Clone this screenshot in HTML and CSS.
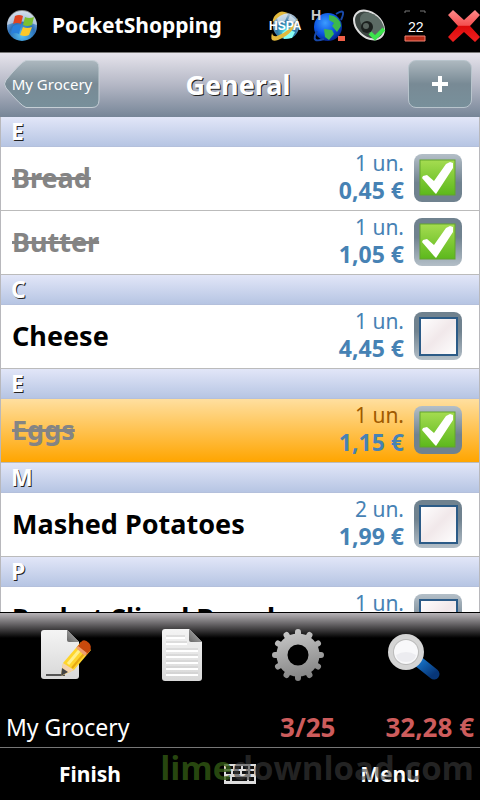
FILE: index.html
```html
<!DOCTYPE html>
<html lang="en">

<head>
    <meta charset="UTF-8">
    <meta name="viewport" content="width=device-width, initial-scale=1.0">
    <title>PocketShopping</title>
    <link rel="stylesheet" href="styles.css">
</head>

<body>
    <!-- shared shapes -->
    <svg class="defs" width="0" height="0" aria-hidden="true">
        <defs>
            <linearGradient id="green" x1="0" y1="0" x2="0" y2="1">
                <stop offset="0" stop-color="#a5dc50" />
                <stop offset="1" stop-color="#5cb81c" />
            </linearGradient>
            <linearGradient id="pane" x1="0" y1="0" x2="1" y2="1">
                <stop offset="0" stop-color="#fff" />
                <stop offset=".5" stop-color="#f1e8ea" />
                <stop offset="1" stop-color="#fff" />
            </linearGradient>
            <linearGradient id="paper" x1="0" y1="0" x2="0" y2="1">
                <stop offset="0" stop-color="#f4f4f4" />
                <stop offset="1" stop-color="#d8d8d8" />
            </linearGradient>
            <linearGradient id="steel" gradientUnits="userSpaceOnUse" x1="20" y1="0" x2="32" y2="52">
                <stop offset="0" stop-color="#c8c8c8" />
                <stop offset="1" stop-color="#808080" />
            </linearGradient>
            <linearGradient id="fold" x1="0" y1="1" x2="1" y2="0">
                <stop offset="0" stop-color="#666" />
                <stop offset="1" stop-color="#bbb" />
            </linearGradient>
            <linearGradient id="handle" x1="0" y1="0" x2="1" y2="1">
                <stop offset="0" stop-color="#1670c4" />
                <stop offset="1" stop-color="#073678" />
            </linearGradient>
            <linearGradient id="red" x1="0" y1="0" x2="0" y2="1">
                <stop offset="0" stop-color="#ff8a8a" />
                <stop offset=".48" stop-color="#f45050" />
                <stop offset=".5" stop-color="#dd0a0a" />
                <stop offset="1" stop-color="#ee2020" />
            </linearGradient>
            <radialGradient id="orb" cx=".5" cy=".8" r=".85">
                <stop offset="0" stop-color="#58c4f4" />
                <stop offset=".5" stop-color="#2c70b8" />
                <stop offset="1" stop-color="#d8e2ee" />
            </radialGradient>
            <radialGradient id="earth" cx=".4" cy=".35" r=".7">
                <stop offset="0" stop-color="#3c9cff" />
                <stop offset=".6" stop-color="#0a50e0" />
                <stop offset="1" stop-color="#042080" />
            </radialGradient>
            <radialGradient id="globe" cx=".5" cy=".7" r=".7">
                <stop offset="0" stop-color="#50e8f4" />
                <stop offset=".5" stop-color="#3078a8" />
                <stop offset="1" stop-color="#b8c8d8" />
            </radialGradient>
            <symbol id="tick" viewBox="0 0 48 48">
                <rect x="6" y="6" width="35" height="35" fill="url(#green)" stroke="#62a52c" />
                <path d="M8 24 9 22 13 21 20 27 32 10 36 8 39 9 39 14 24 37 22 40 20 38Z" fill="#fff" />
            </symbol>
            <symbol id="empty" viewBox="0 0 48 48">
                <rect x="6" y="6" width="37" height="37" fill="url(#pane)" stroke="#2c5b87" stroke-width="2" />
            </symbol>
        </defs>
    </svg>

    <header class="system">
        <svg class="start" viewBox="0 0 32 32" aria-hidden="true">
            <circle cx="16" cy="16" r="15" fill="url(#orb)" />
            <path d="M1 15A15 15 0 0 1 31 15Q16 8 1 15Z" fill="#e2e8ee" opacity=".6" />
            <path d="M9 6Q13 4 17 6L15 14Q11 12 7 14Z" fill="#e04420" />
            <path d="M19 7Q23 9 28 7L26 15Q21 17 17 15Z" fill="#7cc030" />
            <path d="M7 16Q11 14 15 16L13 24Q9 22 5 24Z" fill="#2880dc" />
            <path d="M17 17Q21 19 26 17L23 25Q19 27 14 25Z" fill="#fcc828" />
        </svg>
        <h1 class="app-name">PocketShopping</h1>
        <div class="tray">
            <svg viewBox="0 0 34 34" aria-hidden="true">
                <circle cx="18" cy="17" r="13" fill="url(#globe)" />
                <path d="M9 8Q14 3 20 5L17 12 10 14ZM22 6l6 5-3 3-5-3z" fill="#e4edf5" opacity=".7" />
                <path d="M14 24l5-4 8 3-3 6-8 1z" fill="#88fff4" />
                <path d="M10 4Q4 8 5 13Q12 5 20 4Q13 1 10 4ZM4 24Q1 34 10 31Q26 25 30 9Q23 22 9 27Q5 28 4 24Z" fill="#e2b93c" />
                <text class="hspa" x="1" y="21">HSPA</text>
            </svg>
            <svg viewBox="0 0 34 34" aria-hidden="true">
                <circle cx="16" cy="18" r="14" fill="url(#earth)" />
                <path d="M17 6Q28 7 29 17L25 23 20 17 22 14 17 11ZM12 20l8 1 2 4-5 6-4-3Z" fill="#3cb84c" />
                <path d="M24 5Q35-2 29 11M5 22Q-2 35 12 30" fill="none" stroke="#1848a8" stroke-width="2" />
                <text class="net" x="-1" y="11">H</text>
                <path d="M26 27h7v5h-7z" fill="#f06048" />
            </svg>
            <svg viewBox="0 0 34 34" aria-hidden="true">
                <ellipse cx="13" cy="16" rx="12" ry="17" fill="#3c4642" stroke="#ddd" stroke-width="2" transform="rotate(-48 13 16)" />
                <ellipse cx="16" cy="15" rx="9" ry="14" fill="#5c6b65" transform="rotate(-48 16 15)" />
                <circle cx="11" cy="18" r="6" fill="#1c211f" />
                <circle cx="10" cy="17" r="3" fill="#58635e" />
                <path d="M14 24 19 29 28 20" fill="none" stroke="#3ce44c" stroke-width="4" />
            </svg>
            <svg viewBox="0 0 34 34" aria-hidden="true">
                <path d="M5 4V2H10M20 2H25V4" fill="none" stroke="#777" />
                <path d="M5 27H25V32H5Z" fill="#b82c18" stroke="#ef8070" />
                <text class="level" x="8" y="23">22</text>
            </svg>
        </div>
        <button class="close" type="button" aria-label="Close">
            <svg viewBox="0 0 32 34" aria-hidden="true">
                <path d="M5 1 16 11 27 1 32 6 22 17 32 28 27 33 16 23 5 33 0 28 10 17 0 6Z" fill="url(#red)" />
            </svg>
        </button>
    </header>

    <nav class="title-bar">
        <button class="back" type="button">
            <svg viewBox="0 0 96 48" aria-hidden="true">
                <defs>
                    <linearGradient id="backfill" x1="0" y1="0" x2="0" y2="1">
                        <stop offset="0" stop-color="#adb8bf" />
                        <stop offset=".5" stop-color="#788a95" />
                        <stop offset="1" stop-color="#78909b" />
                    </linearGradient>
                </defs>
                <path d="M22 .5H88Q95 .5 95 8V40Q95 47.500 88 47.500H22Q17 46 2 28Q-1 24 2 20Q17 2 22 .5Z" fill="url(#backfill)" stroke="#c5ced5" />
            </svg>
            <span>My Grocery</span>
        </button>
        <h2 class="title">General</h2>
        <button class="add" type="button" aria-label="Add item">
            <svg viewBox="0 0 16 16" aria-hidden="true">
                <path d="M6 0h4v6h6v4h-6v6H6v-6H0V6h6z" fill="#fff" />
            </svg>
        </button>
    </nav>

    <main class="list">
        <h3 class="letter">E</h3>
        <div class="item done">
            <label class="name" for="bread">Bread</label>
            <p class="amount"><span>1 un.</span><b>0,45 €</b></p>
            <span class="check light"><input type="checkbox" id="bread" checked><svg aria-hidden="true"><use href="#tick" /></svg></span>
        </div>
        <div class="item done">
            <label class="name" for="butter">Butter</label>
            <p class="amount"><span>1 un.</span><b>1,05 €</b></p>
            <span class="check"><input type="checkbox" id="butter" checked><svg aria-hidden="true"><use href="#tick" /></svg></span>
        </div>
        <h3 class="letter">C</h3>
        <div class="item">
            <label class="name" for="cheese">Cheese</label>
            <p class="amount"><span>1 un.</span><b>4,45 €</b></p>
            <span class="check"><input type="checkbox" id="cheese"><svg aria-hidden="true"><use href="#empty" /></svg></span>
        </div>
        <h3 class="letter">E</h3>
        <div class="item done selected">
            <label class="name" for="eggs">Eggs</label>
            <p class="amount"><span>1 un.</span><b>1,15 €</b></p>
            <span class="check light"><input type="checkbox" id="eggs" checked><svg aria-hidden="true"><use href="#tick" /></svg></span>
        </div>
        <h3 class="letter">M</h3>
        <div class="item">
            <label class="name" for="potatoes">Mashed Potatoes</label>
            <p class="amount"><span>2 un.</span><b>1,99 €</b></p>
            <span class="check"><input type="checkbox" id="potatoes"><svg aria-hidden="true"><use href="#empty" /></svg></span>
        </div>
        <h3 class="letter">P</h3>
        <div class="item">
            <label class="name" for="pocket">Pocket Sliced Bread</label>
            <p class="amount"><span>1 un.</span><b>1,25 €</b></p>
            <span class="check light"><input type="checkbox" id="pocket"><svg aria-hidden="true"><use href="#empty" /></svg></span>
        </div>
    </main>

    <div class="tools">
        <button type="button" aria-label="Edit">
            <svg viewBox="0 0 52 52" aria-hidden="true">
                <path d="M4 1H27L39 13V47Q39 50 36 50H4Q1 50 1 47V4Q1 1 4 1Z" fill="url(#paper)" />
                <path d="M27 1 39 13H29Q27 13 27 11Z" fill="url(#fold)" />
                <path d="M6 46H25" stroke="#555" stroke-width="2" />
                <path d="M21 47 23 34 41 13 51 21 34 41Z" fill="#ffd52c" />
                <path d="M28 35 44 16" stroke="#fff08a" stroke-width="3" />
                <path d="M32 39 48 20" stroke="#e7a812" stroke-width="2" />
                <path d="M21 47 23 34 34 41Z" fill="#f4d3ac" />
                <path d="M21 47 22 39 28 43Z" fill="#444" />
                <path d="M37 18 42 12Q45 10 49 14Q52 17 50 22L46 26Z" fill="#c9490c" />
                <path d="M36 19 38 17 47 24 45 27Z" fill="#efa070" />
            </svg>
        </button>
        <button type="button" aria-label="List">
            <svg viewBox="0 0 52 52" aria-hidden="true">
                <path d="M9 0H33L46 13V49Q46 52 43 52H9Q6 52 6 49V3Q6 0 9 0Z" fill="url(#paper)" />
                <path d="M10 9H29M10 15H31M10 22H42M10 28H42M10 34H42M10 40H42M10 46H42" stroke="#fff" stroke-width="2" />
                <path d="M10 7H29M10 13H31M10 20H42M10 26H42M10 32H42M10 38H42M10 44H42" stroke="#ccc" />
                <path d="M33 0 46 13H35Q33 13 33 11Z" fill="url(#fold)" />
            </svg>
        </button>
        <button type="button" aria-label="Settings">
            <svg viewBox="0 0 52 52" aria-hidden="true">
                <circle cx="26" cy="26" r="16" fill="none" stroke="url(#steel)" stroke-width="11" />
                <path d="M26.010 7 26 3M26.010 45 26 49M7 26.010 3 26M45 26.010 49 26M35.500 9.500 37.500 6M16.500 9.500 14.500 6M42.500 16.500 46 14.500M9.500 16.500 6 14.500M42.500 35.500 46 37.500M9.500 35.500 6 37.500M35.500 42.500 37.500 46M16.500 42.500 14.500 46" fill="none" stroke="url(#steel)" stroke-width="6" stroke-linecap="round" />
            </svg>
        </button>
        <button type="button" aria-label="Search">
            <svg viewBox="0 0 52 52" aria-hidden="true">
                <path d="M31 33 46 45" stroke="url(#handle)" stroke-width="11" stroke-linecap="round" />
                <circle cx="18" cy="23" r="18" fill="#d5d5d5" />
                <circle cx="18" cy="23" r="13" fill="#bbb" />
                <circle cx="18" cy="23" r="12" fill="#f8f8fa" />
                <path d="M8 26Q18 20 28 26Q27 33 18 33Q9 33 8 26Z" fill="#ececf0" />
            </svg>
        </button>
    </div>

    <div class="totals">
        <span class="list-name">My Grocery</span>
        <b>3/25</b>
        <b>32,28 €</b>
    </div>

    <footer class="softkeys">
        <button type="button">Finish</button>
        <button type="button" aria-label="Keyboard">
            <svg viewBox="0 0 32 22" aria-hidden="true">
                <path d="M0 1H32V21H0Z" fill="#ddd" />
                <path d="M2 3h7v3H2zM11 3h6v3h-6zM19 3h5v3h-5zM26 3h4v3h-4zM2 8h5v3H2zM9 8h7v3H9zM18 8h6v3h-6zM26 8h4v3h-4zM2 14h4v4H2zM8 14h15v4H8zM25 14h5v4h-5z" fill="#111" />
            </svg>
        </button>
        <button type="button">Menu</button>
        <span class="watermark"><i>lime</i>download.com</span>
    </footer>
</body>

</html>
```
FILE: styles.css
```css
* {
    box-sizing: border-box;
}

body,
h1,
h2,
h3,
p {
    margin: 0;
    padding: 0;
}

body {
    display: flex;
    flex-direction: column;
    height: 100vh;
    background: #000;
    color: #fff;
    font: 21px/27px "Noto Sans", sans-serif;
}

button {
    border: 0;
    padding: 0;
    background: none;
    color: inherit;
    font: inherit;
    cursor: pointer;
}

svg {
    display: block;
}

.defs {
    position: absolute;
}

/* system bar */
.system {
    display: flex;
    align-items: center;
    height: 52px;
    padding-left: 6px;
    flex: none;
}

.start {
    width: 32px;
    height: 32px;
}

.app-name {
    flex: 1;
    padding: 0 0 2px 14px;
    font-size: 21px;
}

.tray {
    display: flex;
    gap: 10px;
    padding-right: 14px;
}

.tray svg {
    width: 34px;
    height: 34px;
    overflow: visible;
}

.tray text {
    fill: #fff;
    font-family: "Liberation Sans", sans-serif;
}

.tray .hspa {
    font-size: 12px;
    font-weight: bold;
}

.tray .net {
    fill: #ccc;
    font-size: 14px;
    font-weight: bold;
}

.tray .level {
    font-size: 14px;
}

.close svg {
    width: 32px;
    height: 34px;
}

/* title bar */
.title-bar {
    display: grid;
    grid-template-columns: 96px 1fr 96px;
    align-items: center;
    flex: none;
    height: 65px;
    padding: 0 8px 2px 4px;
    border-top: 1px solid #777;
    background: linear-gradient(#e6e4ec, #b4b7c5 50%, #768597);
}

.back {
    display: grid;
    align-items: center;
    font-size: 15px;
}

.back svg,
.back span {
    grid-area: 1 / 1;
}

.title {
    text-align: center;
    font-size: 27px;
    text-shadow: 1px 1px #222;
}

.add {
    display: grid;
    place-items: center;
    justify-self: end;
    width: 64px;
    height: 48px;
    border: 1px solid #b8c4cc;
    border-radius: 8px;
    background: linear-gradient(#adb8bf, #788a95 50%, #78909b);
}

.add svg {
    width: 16px;
    height: 16px;
}

/* shopping list */
.list {
    flex: 1;
    overflow: hidden;
    border: solid #b8b8bc;
    border-width: 0 1px;
    background: #fff;
}

.letter {
    height: 30px;
    padding-left: 10px;
    background: linear-gradient(#e2e6f8, #b6c5e3);
    border-bottom: 1px solid #b4c0dc;
    font-size: 23px;
    line-height: 28px;
    text-shadow: 1px 1px #222;
}

.item {
    display: flex;
    align-items: center;
    height: 64px;
    padding: 0 17px 2px 11px;
    border-bottom: 1px solid #bbb;
    color: #000;
}

.name {
    flex: 1;
    font-size: 27px;
    font-weight: bold;
    white-space: nowrap;
}

.done .name {
    color: #848484;
    text-decoration: line-through;
    text-decoration-thickness: 3px;
}

.amount {
    display: flex;
    flex-direction: column;
    padding: 0 10px 2px 0;
    color: #4682b4;
    text-align: right;
}

.amount b {
    font-size: 23px;
}

.selected {
    background: linear-gradient(#ffdf9f, #ffa500);
}

.selected .amount span {
    color: #a05a00;
}

.check {
    display: grid;
    width: 48px;
    height: 48px;
}

.check input,
.check svg {
    grid-area: 1 / 1;
    width: 48px;
    height: 48px;
    margin: 0;
}

.check input {
    appearance: none;
    border-radius: 8px;
    background: linear-gradient(#70828f 40%, #b4bfc8);
}

.check.light input {
    background: linear-gradient(#b4bfc8, #70828f 60%);
}

.check svg {
    pointer-events: none;
}

/* bottom */
.tools {
    display: flex;
    justify-content: space-between;
    flex: none;
    height: 96px;
    padding: 16px 40px 0;
    border-top: 1px solid #000;
    background: linear-gradient(#b8b4b8, #000 25px);
}

.tools button,
.tools svg {
    width: 52px;
    height: 52px;
}

.totals {
    display: flex;
    gap: 50px;
    flex: none;
    height: 40px;
    padding: 6px 6px 0;
    border-bottom: 1px solid #777;
    font-size: 23px;
}

.list-name {
    flex: 1;
}

.totals b {
    color: #cd5c5c;
    font-size: 26px;
}

.softkeys {
    position: relative;
    display: grid;
    grid-template-columns: 180px 1fr 180px;
    align-items: center;
    flex: none;
    height: 52px;
    font-weight: bold;
}

.softkeys svg {
    width: 32px;
    height: 22px;
    margin: 0 auto;
}

.watermark {
    position: absolute;
    right: 6px;
    bottom: 14px;
    color: rgba(60, 60, 60, .6);
    font: bold 33px/36px "Open Sans", sans-serif;
    pointer-events: none;
}

.watermark i {
    color: rgba(50, 90, 20, .8);
    font-style: normal;
}
```
